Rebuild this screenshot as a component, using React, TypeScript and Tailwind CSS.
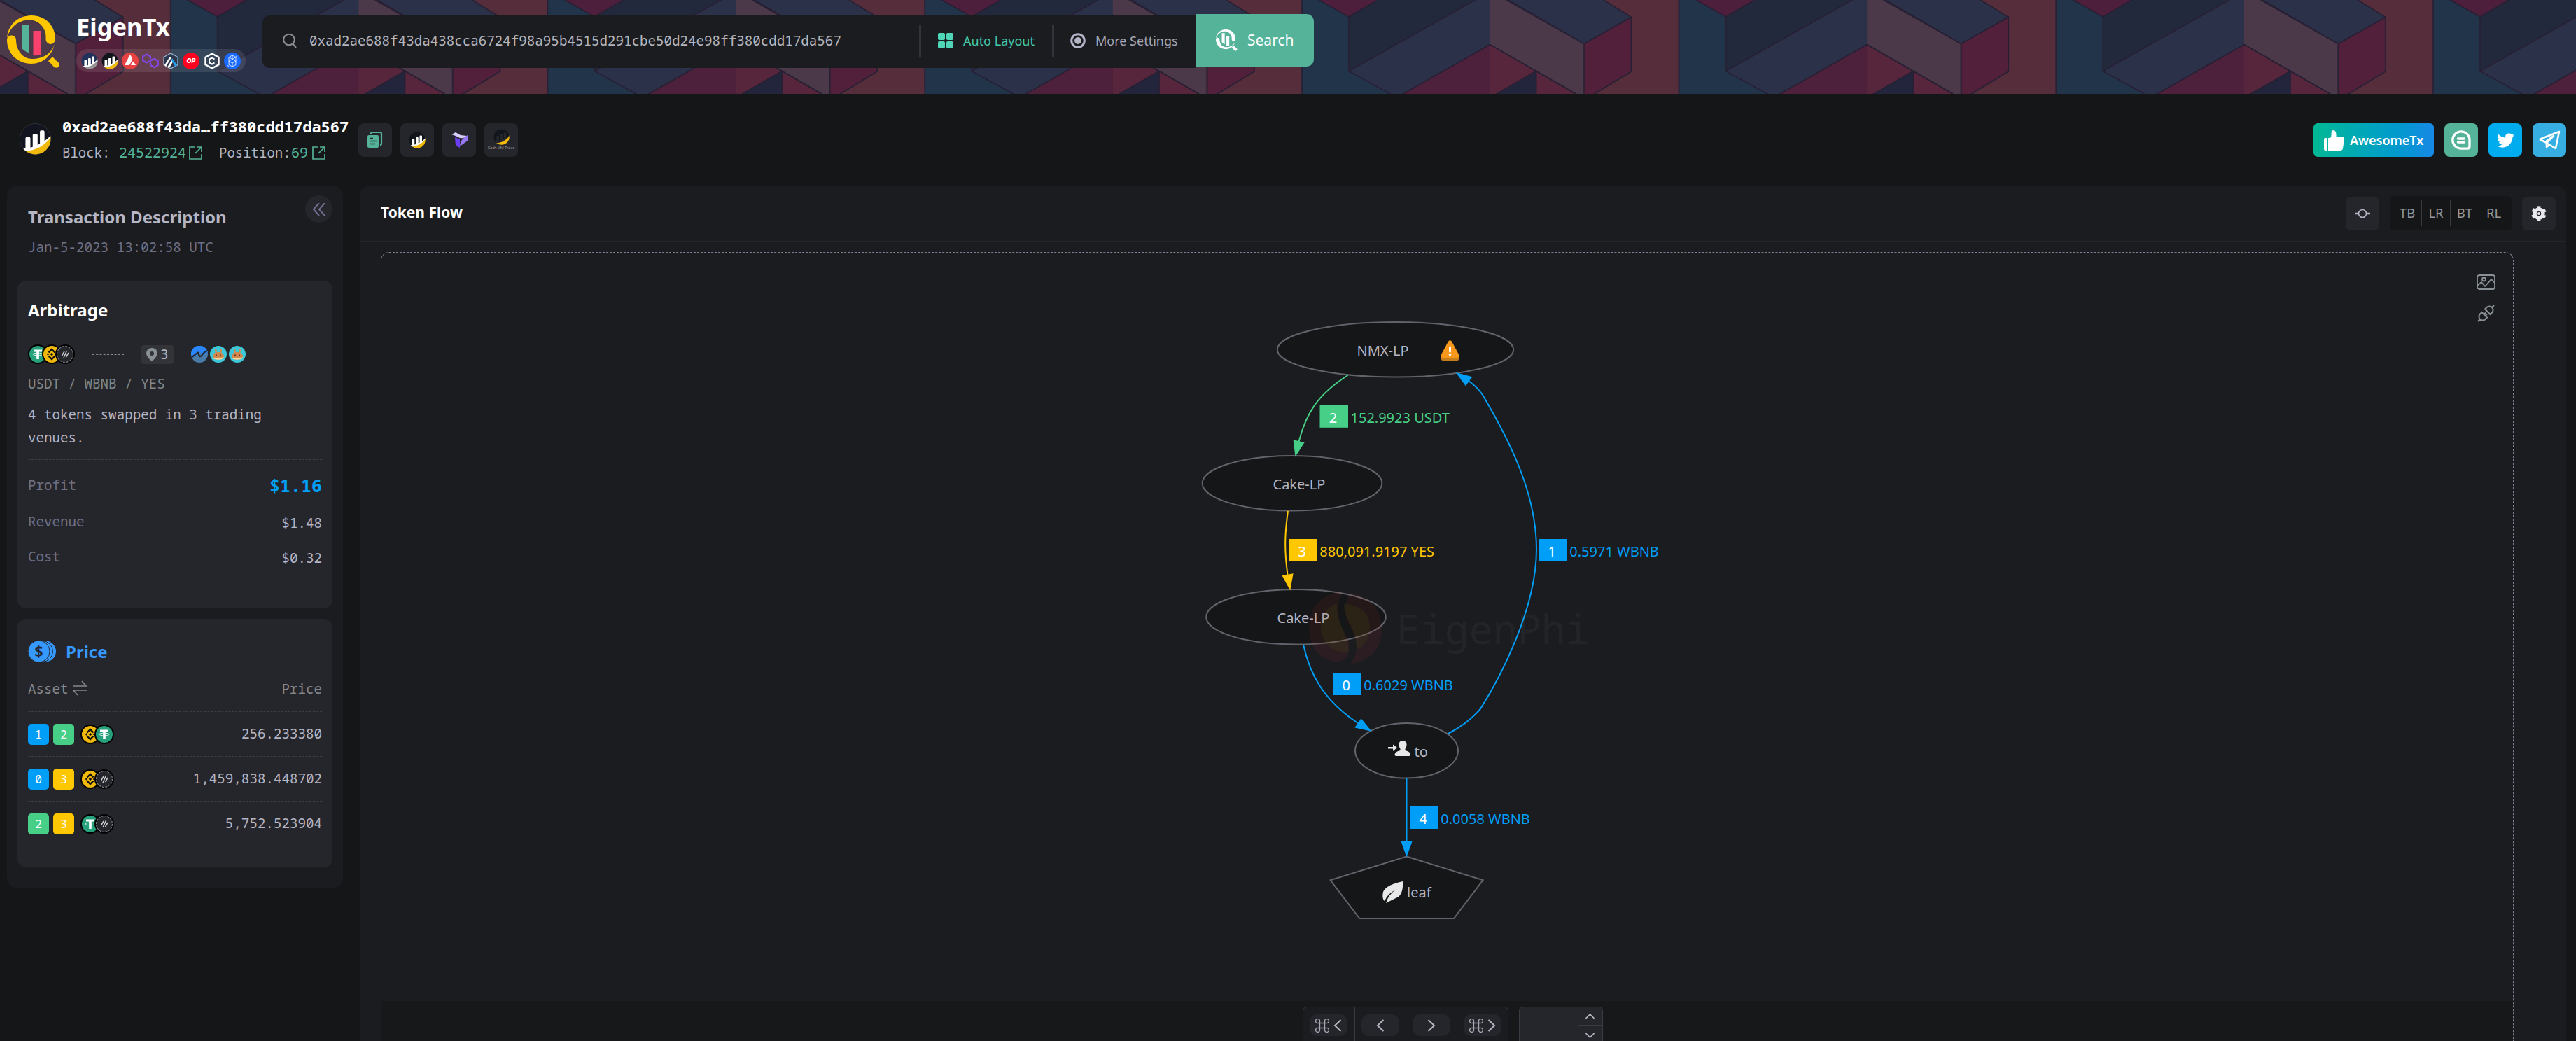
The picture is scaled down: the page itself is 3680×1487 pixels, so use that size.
import React from "react";

const MONO = "font-['Noto_Sans_Mono','DejaVu_Sans_Mono',monospace]";

function HeaderPattern() {
  return (
    <svg className="absolute inset-0 h-full w-full" aria-hidden="true">
      <defs>
        <pattern id="cubes" x="-26.2" y="0" width="538.7" height="134" patternUnits="userSpaceOnUse">
          <rect width="538.7" height="134" fill="#22344a" />
          <rect width="270" height="134" fill="#562d3a" />
          <g stroke="#261f33" strokeWidth="1.8" strokeLinejoin="round">
            <path d="M25 -2 159 -2 202 24.5 134.3 62.5 23 -2Z" fill="#2c314a" />
            <path d="M134.3 62.5 202 24.5V102L146 136H134.3Z" fill="#52203a" />
            <path d="M0 63.5 66 101.5 126 136H-1Z" fill="#57263c" />
            <path d="M66 101.5V136H6Z" fill="#22253b" />
            <path d="M291 -2 337 24 382 -2Z" fill="#4d1f3c" />
            <path d="M337 24 382 -2H521L337 101.5Z" fill="#22293d" />
            <path d="M337 101.5 521 -2H540V63L412 136H400Z" fill="#2c314a" />
            <path d="M540 62.7V136H411Z" fill="#4d203b" />
            <path d="M270 -1V136" />
          </g>
          <path d="M0 0H24L134.3 62.5V134H123L0 63.5Z" fill="#4b3849" />
          <path d="M22 -1 134.3 62.5V135M123 134 0 63.5" fill="none" stroke="#261f33" strokeWidth="1.8" />
          <path d="M538.1 0V62.5" stroke="#2c314a" strokeWidth="1.4" />
          <path d="M538.1 65V134" stroke="#4d203b" strokeWidth="1.4" />
          <path d="M.6 65.5V134" stroke="#57263c" strokeWidth="1.4" />
        </pattern>
      </defs>
      <rect width="100%" height="100%" fill="url(#cubes)" />
    </svg>
  );
}

function BarsLogo({ size, dark, base, id, bars = "#fff", ring = false }: { size: number; dark: string; base: string; id: string; bars?: string; ring?: boolean }) {
  return (
    <svg width={size} height={size} viewBox="0 0 48 48" className="shrink-0">
      <clipPath id={id}>
        <circle cx="24" cy="24" r="23.500" />
      </clipPath>
      {ring && <circle cx="24" cy="24" r="23.300" fill="none" stroke="#3c3f45" strokeWidth="1" />}
      <g clipPath={`url(#${id})`}>
        <circle cx="24" cy="24" r="23.200" fill={dark} />
        <path d="M4 40Q32 40 48 19V48H4Z" fill={base} />
        <path
          d="M0 40Q5 38.5 9 38V23Q9 21 11 21H14.5Q16.500 21 16.500 23V37Q18.500 36.500 20 36V18Q20 16 22 16H25.500Q27.500 16 27.500 18V33Q29.500 32 31 31V13Q31 11 33 11H36Q38 11 38 13V27Q43 23.500 48 18V21Q38 34 25 39Q14 43 4 43Z"
          fill={bars}
        />
      </g>
    </svg>
  );
}

function EigenLogo() {
  return (
    <svg width="76" height="76" viewBox="0 0 76 76" className="shrink-0">
      <path d="M0 33C1 14 15 0 35 0 55 0 69 15 69 33 69 44 55 43 55.500 33 57 19 46 6.500 32 6.500 16 6.500 4 17 0 33Z" fill="#ffc700" />
      <path d="M0 35C0 27 12.500 26 13 35 13 49 22 62 36 62 52 62 64 54 68 41 64 58 51 69 35 69 15 69 0 54 0 35Z" fill="#ffc700" />
      <path d="M62 62 71 71" stroke="#ffc700" strokeWidth="8.500" />
      <path d="M69 69 70.500 70.500" stroke="#ffc700" strokeWidth="8.500" strokeLinecap="round" />
      <path d="M21 13H32V54Q26 52 21 47Z" fill="#55b399" />
      <path d="M37.500 22H48V56Q42 58 37.500 57Z" fill="#f8406d" />
    </svg>
  );
}

function ChainIcons() {
  return (
    <div className="flex h-[33px] w-[242px] items-center rounded-full bg-[#ffffff]/10 pl-[7px] [&>svg]:mr-[5.100px]">
      <BarsLogo size={24} dark="#21325b" base="#979695" id="c-eth" />
      <BarsLogo size={24} dark="#12161c" base="#f0b90b" id="c-bsc" />
      <svg width="24" height="24" viewBox="0 0 24 24" className="shrink-0">
        <circle cx="12" cy="12" r="12" fill="#e84142" />
        <path d="M4 18 11 4.500Q12 3 13 4.500L15 8.500Q15.300 9.500 15 10.500L11.500 17Q11 18 10 18ZM13 18 16 13Q16.500 12.300 17 13L20 18Z" fill="#fff" />
      </svg>
      <svg width="24" height="24" viewBox="0 0 24 24" className="shrink-0" fill="none" stroke="#8247e5" strokeWidth="2.200" strokeLinejoin="round">
        <path d="M12 9.500V5.500L6.500 2.500 1.200 5.500V11.500L6.500 14.500 17.500 8.800 22.800 12V18L17.500 21.200 12 18V14" />
      </svg>
      <svg width="24" height="24" viewBox="0 0 24 24" className="shrink-0" fill="none">
        <path d="M12 1 22 6.500V17.500L12 23 2 17.500V6.500Z" fill="#2d374b" stroke="#96bedc" strokeWidth="1.200" />
        <path d="M3 18 10 7H13L5 20ZM7 21 14.500 9 16 11.500 10 22Z" fill="#fff" />
        <path d="M14 8 21 18 18.500 20 13 11Z" fill="#28a0f0" />
      </svg>
      <svg width="24" height="24" viewBox="0 0 24 24" className="shrink-0">
        <circle cx="12" cy="12" r="12" fill="#ff0420" />
        <text x="12" y="15.300" textAnchor="middle" fontFamily="Inter" fontWeight="800" fontStyle="italic" fontSize="9" fill="#fff">OP</text>
      </svg>
      <svg width="24" height="24" viewBox="0 0 24 24" className="shrink-0" fill="none" stroke="#fff">
        <path d="M12 1.500 21.500 6.700V17.300L12 22.500 2.500 17.300V6.700Z" strokeWidth="2.400" />
        <path d="M15.500 9.500 12 7.500 8 9.700V14.300L12 16.500 15.500 14.500" strokeWidth="2" />
      </svg>
      <svg width="24" height="24" viewBox="0 0 24 24" className="shrink-0" fill="none">
        <circle cx="12" cy="12" r="12" fill="#1969ff" />
        <path d="M12 4 17 6.500V17.500L12 20 7 17.500V6.500ZM7 6.500 12 9.500 17 6.500M7 12.500 12 9.500 17 12.500 12 15ZM12 4V9.500M12 15V20M5 18.500 7 19.500M17 5 19 6" stroke="#fff" strokeWidth=".8" />
      </svg>
    </div>
  );
}

function Header() {
  return (
    <header className="relative h-[134px] shrink-0 overflow-hidden">
      <HeaderPattern />
      <div className="relative flex h-full items-start">
        <div className="mt-[22px] ml-[10px]">
          <EigenLogo />
        </div>
        <div className="mt-[12px] ml-[23px] w-[266px]">
          <h1 className="h-[58px] text-[34.500px] leading-[52px] font-bold text-white">EigenTx</h1>
          <ChainIcons />
        </div>
        <div className="mt-[20px] flex h-[77px] w-[1502px] items-start">
          <div className="mt-[2px] flex h-[75px] w-[1333px] items-center rounded-l-[10px] bg-[#1b1c20] pb-[3px]">
            <svg width="24" height="24" viewBox="0 0 24 24" fill="none" stroke="#8d8e92" strokeWidth="2" className="mr-[16px] ml-[27px]">
              <circle cx="11" cy="10.500" r="7.800" />
              <path d="M16.500 16.500 21 22" />
            </svg>
            <span className={`${MONO} w-[871px] text-[19.200px] text-[#b5b5bd]`}>0xad2ae688f43da438cca6724f98a95b4515d291cbe50d24e98ff380cdd17da567</span>
            <span className="h-[45px] w-[3px] bg-[#32333b]" />
            <svg width="22" height="22" viewBox="0 0 22 22" fill="#4fd6b6" className="ml-[24px]">
              <rect width="10" height="10" rx="2" />
              <rect x="12" width="10" height="10" rx="2" />
              <rect y="12" width="10" height="10" rx="2" />
              <rect x="12" y="12" width="10" height="10" rx="2" />
            </svg>
            <span className="ml-[14px] w-[127px] text-[18px] text-[#43c9a5]">Auto Layout</span>
            <span className="h-[45px] w-[3px] bg-[#32333b]" />
            <svg width="22" height="22" viewBox="0 0 22 22" fill="none" className="ml-[23px]">
              <circle cx="11" cy="11" r="9.300" stroke="#b5b5c8" strokeWidth="3" />
              <circle cx="11" cy="11" r="5" fill="#b5b5c8" />
            </svg>
            <span className="ml-[14px] text-[18px] whitespace-nowrap text-[#a6a6b6]">More Settings</span>
          </div>
          <div className="flex h-[75px] w-[169px] items-center rounded-r-[10px] bg-[#55b399] pl-[29px]">
            <svg width="31" height="31" viewBox="0 0 76 76">
              <path d="M0 33C1 14 15 0 35 0 55 0 69 15 69 33 69 44 55 43 55.500 33 57 19 46 6.500 32 6.500 16 6.500 4 17 0 33ZM0 35C0 27 12.500 26 13 35 13 49 22 62 36 62 52 62 64 54 68 41 64 58 51 69 35 69 15 69 0 54 0 35ZM21 13H31V52L21 45ZM37 22H47V57H37Z" fill="#fff" />
              <path d="M59 60 72 73" stroke="#fff" strokeWidth="10" />
            </svg>
            <span className="ml-[14px] text-[21px] text-white">Search</span>
          </div>
        </div>
      </div>
    </header>
  );
}

function ExternalIcon() {
  return (
    <svg width="19" height="19" viewBox="0 0 19 19" fill="none" stroke="#55b399" strokeWidth="1.700" className="shrink-0">
      <path d="M8 1H1V18H18V11M11 1H18V8M18 1 9 10" />
    </svg>
  );
}

function Square({ children, className = "bg-[#25262b]" }: { children: React.ReactNode; className?: string }) {
  return <div className={`flex h-[48px] w-[48px] shrink-0 items-center justify-center rounded-[8px] ${className}`}>{children}</div>;
}

function TxBar() {
  return (
    <section className="flex h-[131px] shrink-0 items-start pt-[42px] pr-[14px] pl-[28px]">
      <BarsLogo size={45} dark="#12151f" base="#f0b90b" id="tx-bsc" ring />
      <div className={`${MONO} -mt-[14px] ml-[16px] w-[423px]`}>
        <div className="h-[38px] text-[22px] leading-[36px] font-bold text-white">0xad2ae688f43da…ff380cdd17da567</div>
        <div className="flex h-[36px] items-center text-[20px] text-[#b5b5c3]">
          <span className="w-[81px] text-[19px]">Block:</span>
          <span className="w-[100px] text-[#55b399]">24522924</span>
          <ExternalIcon />
          <span className="ml-[24px] w-[103px] text-[19px]">Position:</span>
          <span className="w-[30px] text-[#55b399]">69</span>
          <ExternalIcon />
        </div>
      </div>
      <div className="flex gap-[12px]">
        <Square>
          <svg width="22" height="24" viewBox="0 0 22 24">
            <path d="M5 3Q5 1 7 1H18Q20 1 20 3V17Q20 19 18 19" fill="none" stroke="#55b399" strokeWidth="2.200" />
            <rect y="5" width="16" height="18" rx="2" fill="#55b399" />
            <path d="M3 9.500H8M3 13.500H13M3 17.500H11" stroke="#25262b" strokeWidth="1.500" />
          </svg>
        </Square>
        <Square>
          <BarsLogo size={24} dark="#12161c" base="#f0b90b" id="sq-bsc" />
        </Square>
        <Square>
          <svg width="24" height="24" viewBox="0 0 24 24">
            <path d="M1 4 7 1 14 5 23 6Q19 10 13 9Q8 6 1 4Z" fill="#d9cdfb" />
            <path d="M6 8 13 11V23L7 20Z" fill="#6a3df0" />
            <path d="M24 5V13L13 21Q13 11 24 5Z" fill="#9877f5" />
          </svg>
        </Square>
        <Square>
          <div className="flex flex-col items-center">
            <BarsLogo size={23} dark="#12161c" base="#f0b90b" id="geth-bsc" bars="#25262b" />
            <span className="-mx-2 text-[5.700px] leading-[9px] whitespace-nowrap text-[#9a9a9f]">Geth VM Trace</span>
          </div>
        </Square>
      </div>
      <div className="ml-auto flex gap-[15px]">
        <div className="flex h-[48px] w-[172px] items-center rounded-[6px] bg-linear-to-r from-[#00b894] to-[#1789e4] pl-[15px]">
          <svg width="29" height="29" viewBox="0 0 29 29" fill="#fff">
            <path d="M0 13Q0 11 2 11H5V29H2Q0 29 0 27ZM6 11H9Q11 9 10.500 4 10.500 0 14 0 18 1 17.500 9H26Q29.500 9 29 13L27 26Q26.500 29 23 29H6Z" />
          </svg>
          <span className="ml-[8px] text-[18px] font-semibold text-white">AwesomeTx</span>
        </div>
        <Square className="bg-[#55b399]">
          <svg width="28" height="28" viewBox="0 0 28 28" fill="none" stroke="#fff">
            <path d="M14 1.800A12 12 0 1 0 14 26.200H23Q26 26.200 26 23V14A12 12 0 0 0 14 1.800Z" strokeWidth="3.300" />
            <path d="M9.500 12H18.500M9.500 17H18.500" strokeWidth="3.500" strokeLinecap="round" />
          </svg>
        </Square>
        <Square className="bg-[#00acee]">
          <svg width="25" height="25" viewBox="0 0 24 24" fill="#fff">
            <path d="M23.950 4.570a10 10 0 0 1-2.820.770 4.960 4.960 0 0 0 2.160-2.720c-.950.550-2 .950-3.130 1.180a4.920 4.920 0 0 0-8.380 4.480C7.690 8.100 4.070 6.130 1.640 3.160a4.820 4.820 0 0 0-.670 2.480c0 1.710.870 3.210 2.190 4.100a4.900 4.900 0 0 1-2.230-.620v.060a4.920 4.920 0 0 0 3.950 4.830 5 5 0 0 1-2.210.080 4.940 4.940 0 0 0 4.600 3.420A9.870 9.870 0 0 1 0 19.540a14 14 0 0 0 7.550 2.210c9.050 0 14-7.500 14-13.980 0-.210 0-.420-.020-.630a9.940 9.940 0 0 0 2.460-2.550z" />
          </svg>
        </Square>
        <Square className="bg-[#37aee2]">
          <svg width="32" height="28" viewBox="0 0 32 28" fill="none" stroke="#fff" strokeWidth="2.600" strokeLinejoin="round">
            <path d="M2 13 30 2 25 26 10 17 22 8 12 18V24L16 21M10 17 2 13" />
          </svg>
        </Square>
      </div>
    </section>
  );
}

type Token = "usdt" | "bnb" | "none";

function TokenIcon({ kind }: { kind: Token }) {
  return (
    <svg width="28" height="28" viewBox="0 0 28 28" className="shrink-0">
      <circle cx="14" cy="14" r="14" fill="#000" />
      {kind === "usdt" && (
        <>
          <circle cx="14" cy="14" r="12" fill="#26a17b" />
          <path d="M8 7.500H20V10.500H15.800V21H12.200V10.500H8Z" fill="#fff" />
          <ellipse cx="14" cy="14" rx="7" ry="1.800" fill="none" stroke="#fff" strokeWidth=".8" />
        </>
      )}
      {kind === "bnb" && (
        <>
          <circle cx="14" cy="14" r="12" fill="#f0b90b" />
          <path d="M9.500 11.500 14 7 18.500 11.500M9.500 16.500 14 21 18.500 16.500" fill="none" stroke="#111" strokeWidth="2.300" />
          <path d="M14 11.700 16.300 14 14 16.300 11.700 14ZM8.500 12.300 10.200 14 8.500 15.700 6.800 14ZM19.500 12.300 21.200 14 19.500 15.700 17.800 14Z" fill="#111" />
        </>
      )}
      {kind === "none" && (
        <>
          <circle cx="14" cy="14" r="11.500" fill="#25262b" stroke="#7b7c82" strokeWidth="1.200" strokeDasharray="3 1.500" />
          <path d="M9.500 16 13 10M12 19 16.500 9M15.500 18 19 12" stroke="#c9c9cf" strokeWidth="1.500" />
        </>
      )}
    </svg>
  );
}

function TokenStack({ tokens }: { tokens: Token[] }) {
  return (
    <div className="flex [&>svg+svg]:-ml-[8.500px]">
      {tokens.map((t) => (
        <TokenIcon key={t} kind={t} />
      ))}
    </div>
  );
}

function CakeIcon() {
  return (
    <svg width="24" height="24" viewBox="0 0 24 24" className="shrink-0">
      <circle cx="12" cy="12" r="12" fill="#3cc8d8" />
      <path d="M7 5.500Q8 3.500 9.300 5.500L10 9H14L14.700 5.500Q16 3.500 17 5.500L16.500 10Q20 12 20 15 19.500 19.500 12 19.500 4.500 19.500 4 15 4 12 7.500 10Z" fill="#d1884f" />
      <path d="M4 15.500Q5 18 12 18 19 18 20 15.500 20 19.800 12 19.800 4 19.800 4 15.500Z" fill="#f3d9a4" />
      <ellipse cx="9" cy="13.500" rx=".9" ry="1.300" fill="#5b3418" />
      <ellipse cx="15" cy="13.500" rx=".9" ry="1.300" fill="#5b3418" />
    </svg>
  );
}

function StatRow({ label, value, className }: { label: string; value: string; className: string }) {
  return (
    <div className="flex items-center justify-between">
      <span className="text-[#6f6f86]">{label}</span>
      <span className={className}>{value}</span>
    </div>
  );
}

const PRICES: { a: string; ac: string; b: string; bc: string; tokens: Token[]; price: string }[] = [
  { a: "1", ac: "bg-[#009ef7]", b: "2", bc: "bg-[#47cf87]", tokens: ["bnb", "usdt"], price: "256.233380" },
  { a: "0", ac: "bg-[#009ef7]", b: "3", bc: "bg-[#ffc700]", tokens: ["bnb", "none"], price: "1,459,838.448702" },
  { a: "2", ac: "bg-[#47cf87]", b: "3", bc: "bg-[#ffc700]", tokens: ["usdt", "none"], price: "5,752.523904" },
];

function Sidebar() {
  return (
    <aside className="h-[1004px] w-[480px] shrink-0 rounded-[15px] bg-[#1b1c20] px-[15px]">
      <div className="flex h-[136px] justify-between">
        <div className="pt-[27px] pl-[15px]">
          <h2 className="h-[36px] text-[24px] leading-[36px] font-bold whitespace-nowrap text-[#b5b5c3]">Transaction Description</h2>
          <p className={`${MONO} mt-[10px] text-[19.200px] leading-[30px] text-[#6f6f86]`}>Jan-5-2023 13:02:58 UTC</p>
        </div>
        <div className="mt-[14px] flex h-[39px] w-[39px] items-center justify-center rounded-full bg-[#25262b]">
          <svg width="18" height="18" viewBox="0 0 18 18" fill="none" stroke="#6f6f8f" strokeWidth="2">
            <path d="M9 0 1 9 9 18M17 0 9 9 17 18" />
          </svg>
        </div>
      </div>

      <div className={`h-[468px] rounded-[12px] bg-[#25262b] px-[15px] pt-[24px] text-[19.200px] ${MONO}`}>
        <h3 className="h-[36px] font-['Noto_Sans',sans-serif] text-[24px] leading-[36px] font-bold text-white">Arbitrage</h3>
        <div className="mt-[30px] flex h-[30px] items-center">
          <TokenStack tokens={["usdt", "bnb", "none"]} />
          <span className="ml-[25px] w-[45px] border-t border-dashed border-[#8a8b8f]" />
          <span className="mr-[24px] ml-[24px] flex h-[27px] w-[48px] items-center rounded-[5px] bg-[#333438] pl-[8px]">
            <svg width="16" height="19" viewBox="0 0 16 19">
              <path d="M8 0A8 8 0 0 1 16 8Q15 14 8 19 1 14 0 8A8 8 0 0 1 8 0Z" fill="#8a9196" />
              <circle cx="8" cy="8" r="3" fill="#333438" />
            </svg>
            <span className="ml-[4px] text-[#b5b5c3]">3</span>
          </span>
          <div className="flex gap-[3px]">
            <svg width="24" height="24" viewBox="0 0 24 24">
              <circle cx="12" cy="12" r="12" fill="#4a7ba8" />
              <path d="M0 13A12 12 0 0 1 22 5L24 9Q20 11 17 15L13 9Q9 14 3 16Z" fill="#2a86ff" />
              <path d="M1 16Q6 13 9 10 11 8.500 11 12 12 17 15 14 18 9 23 7" fill="none" stroke="#25262b" strokeWidth="2.200" />
            </svg>
            <CakeIcon />
            <CakeIcon />
          </div>
        </div>
        <p className="mt-[12px] leading-[30px] text-[#80888a]">USDT / WBNB / YES</p>
        <p className="mt-[12px] w-[380px] leading-[33px] text-[#b5b5c3]">4 tokens swapped in 3 trading venues.</p>
        <div className="mt-[15px] mb-[15px] border-t border-dashed border-[#3d3e47]" />
        <div className="flex flex-col">
          <div className="h-[52px]">
            <StatRow label="Profit" value="$1.16" className="text-[25px] leading-[42px] font-bold text-[#009ef7]" />
          </div>
          <div className="h-[50px]">
            <StatRow label="Revenue" value="$1.48" className="pt-[3px] leading-[40px] text-[#b5b5c3]" />
          </div>
          <StatRow label="Cost" value="$0.32" className="pt-[3px] leading-[40px] text-[#b5b5c3]" />
        </div>
      </div>

      <div className={`mt-[15px] h-[355px] rounded-[12px] bg-[#25262b] px-[15px] pt-[28px] text-[19.200px] ${MONO}`}>
        <div className="flex h-[37px] items-center">
          <svg width="41" height="31" viewBox="0 0 41 31">
            <circle cx="25" cy="15.500" r="15" fill="#3699ff" />
            <circle cx="20.500" cy="15.500" r="15" fill="#3699ff" stroke="#25262b" strokeWidth="1" />
            <circle cx="15.500" cy="15.500" r="15.500" fill="#3699ff" stroke="#25262b" strokeWidth="1" />
            <text x="15.500" y="23" textAnchor="middle" fontFamily="Noto Sans" fontWeight="700" fontSize="21" fill="#25262b">$</text>
          </svg>
          <span className="ml-[13px] font-['Noto_Sans',sans-serif] text-[24px] font-bold text-[#3699ff]">Price</span>
        </div>
        <div className="mt-[19px] flex h-[49px] items-start justify-between border-b border-dashed border-[#3d3e47] leading-[32px] text-[#85868a]">
          <span className="flex items-center">
            Asset
            <svg width="20" height="22" viewBox="0 0 20 22" fill="none" stroke="#85868a" strokeWidth="1.700" className="mb-[3px] ml-[6px]">
              <path d="M0 8H19L13 1M20 14H1L7 21" />
            </svg>
          </span>
          <span>Price</span>
        </div>
        {PRICES.map((p) => (
          <div key={p.price} className="flex h-[64px] items-center border-b border-dashed border-[#3d3e47] text-[#b5b5c3]">
            <span className={`flex h-[30px] w-[30px] items-center justify-center rounded-[5px] text-[16px] text-white ${p.ac}`}>{p.a}</span>
            <span className={`mr-[9px] ml-[6px] flex h-[30px] w-[30px] items-center justify-center rounded-[5px] text-[16px] text-white ${p.bc}`}>{p.b}</span>
            <TokenStack tokens={p.tokens} />
            <span className="ml-auto">{p.price}</span>
          </div>
        ))}
      </div>
    </aside>
  );
}

function EdgeLabel({ x, y, n, text, color }: { x: number; y: number; n: string; text: string; color: string }) {
  return (
    <g>
      <rect x={x} y={y} width="40.500" height="32" fill={color} />
      <text x={x + 19} y={y + 25.300} textAnchor="middle" fill="#fff">{n}</text>
      <text x={x + 44} y={y + 25.300} fill={color}>{text}</text>
    </g>
  );
}

function Graph() {
  const blue = "#009ef7";
  const green = "#47cf87";
  const yellow = "#ffc700";
  return (
    <svg className="absolute top-0 left-0" width="3045" height="1126" viewBox="545 361 3045 1126" fontFamily="Noto Sans" fontSize="20">
      <g fill="#141617" stroke="#62636b" strokeWidth="2">
        <ellipse cx="1993.500" cy="499.300" rx="168.700" ry="39.300" />
        <ellipse cx="1846" cy="690.300" rx="128.300" ry="39.300" />
        <ellipse cx="1851.500" cy="881.300" rx="128.300" ry="39.300" />
        <ellipse cx="2009.500" cy="1072.300" rx="73.500" ry="39.300" />
        <path d="M2009.500 1223.500 2118.600 1257.300 2077 1312H1942.300L1900.600 1257.300Z" />
      </g>
      <g fill="none" strokeWidth="2">
        <path d="M1925.500 536C1882 564 1866 590 1855.500 631" stroke={green} />
        <path d="M1840 730C1835 765 1835 788 1839.500 821" stroke={yellow} />
        <path d="M1862 921C1871 962 1890 1000 1940 1033" stroke={blue} />
        <path d="M2068 1048.500C2090 1037 2103 1027 2115 1012.500 2142 970 2195 870 2195 785 2195 705 2157 630 2118 564 2112 555 2105 549 2098 544" stroke={blue} />
        <path d="M2009.500 1111.500V1204" stroke={blue} />
      </g>
      <path d="M1850.500 652.500 1847.600 628.300 1863.600 632Z" fill={green} />
      <path d="M1843.200 843.500 1831.600 822.300 1847.600 819.300Z" fill={yellow} />
      <path d="M2079.800 532 2103.500 538.300 2093.800 551.300ZM1959.600 1044.700 1935.300 1039.600 1944.500 1026.200ZM2009.500 1224.500 2001.600 1202H2017.500Z" fill={blue} />
      <g fill="#b5b5c3">
        <text x="1938.500" y="508">NMX-LP</text>
        <text x="1818.500" y="699">Cake-LP</text>
        <text x="1824.500" y="890">Cake-LP</text>
        <text x="2020.500" y="1081">to</text>
        <text x="2010" y="1282">leaf</text>
      </g>
      <path d="M2069 488Q2071.500 484.500 2074 488L2084 506V513Q2084 515 2082 515H2061Q2059 515 2059 513V506Z" fill="#c87d1b" />
      <path d="M2069 488Q2071.500 484.500 2074 488L2084 507Q2085 511 2082 511H2061Q2058 511 2059 507Z" fill="#f7981d" />
      <path d="M2071.500 496V502" stroke="#fff" strokeWidth="3" strokeLinecap="round" />
      <circle cx="2071.500" cy="506.500" r="1.800" fill="#fff" />
      <g fill="#e8e8e8">
        <path d="M1983 1067H1990V1063.500L1996 1068 1990 1073V1069.500H1983ZM2004 1058C2008 1058 2010 1061 2009.500 1065 2009 1068 2007 1069 2007.500 1072 2012 1073 2015 1075 2015 1078Q2015 1080 2013 1080H1994.500Q1992.500 1080 1992.500 1078C1993 1075 1996 1073 2000.500 1072 2001 1069 1999 1068 1998.500 1065 1998 1061 2000 1058 2004 1058Z" />
        <path d="M2004 1259Q2005 1275 1998 1281 1990 1285 1980 1290 1984 1277 1994 1271 1983 1276 1978 1287 1974 1284 1976 1274 1980 1264 2004 1259Z" />
      </g>
      <EdgeLabel x={1885.500} y={578.800} n="2" text="152.9923 USDT" color={green} />
      <EdgeLabel x={1841.300} y={770} n="3" text="880,091.9197 YES" color={yellow} />
      <EdgeLabel x={2198.300} y={770} n="1" text="0.5971 WBNB" color={blue} />
      <EdgeLabel x={1904.300} y={961} n="0" text="0.6029 WBNB" color={blue} />
      <EdgeLabel x={2014.300} y={1152} n="4" text="0.0058 WBNB" color={blue} />
      <g>
        <path d="M1919 844Q1870 852 1870 898 1872 940 1910 946 1930 944 1927 915 1900 875 1919 844ZM1930 847Q1972 856 1974 898 1974 940 1929 949 1944 930 1934 905 1912 870 1930 847Z" fill="#f03030" fillOpacity=".08" />
        <path d="M1910 862Q1887 870 1887 897 1889 930 1926 933 1928 920 1918 898 1909 880 1910 862ZM1920 862Q1957 866 1957 897 1956 920 1938 928 1938 910 1930 893 1919 875 1920 862Z" fill="#80a000" fillOpacity=".08" />
        <text x="1995" y="920" fontFamily="Noto Sans Mono, DejaVu Sans Mono" fontSize="57.500" fill="#fff" fillOpacity=".035">EigenPhi</text>
      </g>
    </svg>
  );
}

function Command() {
  return (
    <svg width="20" height="20" viewBox="0 0 20 20" fill="none" stroke="#a9a9b5" strokeWidth="1.300">
      <path d="M6.500 6.500H13.500V13.500H6.500ZM6.500 6.500H4A3 3 0 1 1 6.500 4ZM13.500 6.500V4A3 3 0 1 1 16 6.500ZM13.500 13.500H16A3 3 0 1 1 13.500 16ZM6.500 13.500V16A3 3 0 1 1 4 13.500Z" />
    </svg>
  );
}

function Chevron({ right = false }: { right?: boolean }) {
  return (
    <svg width="12" height="18" viewBox="0 0 12 18" fill="none" stroke="#b5b5c3" strokeWidth="2">
      <path d={right ? "M1.500 1 10 9 1.500 17" : "M10.500 1 2 9 10.500 17"} />
    </svg>
  );
}

function Key({ children }: { children: React.ReactNode }) {
  return (
    <div className="flex h-full w-[73.500px] justify-center border-l border-[#3a3b42] pt-[10px] first:border-l-0">
      <span className="flex h-[31px] w-[54px] items-center justify-center gap-[6px] rounded-[11px] bg-[#25262b]">{children}</span>
    </div>
  );
}

function Pager() {
  return (
    <div className="relative flex h-[57px] items-start justify-center overflow-hidden bg-[#17181a] pt-[8px] pl-[15px]">
      <div className="flex h-[60px] w-[294px] rounded-[6px] border border-[#3a3b42] bg-[#1b1c20]">
        <Key><Command /><Chevron /></Key>
        <Key><Chevron /></Key>
        <Key><Chevron right /></Key>
        <Key><Command /><Chevron right /></Key>
      </div>
      <div className="ml-[15px] flex h-[60px] w-[120px] rounded-[6px] border border-[#3a3b42] bg-[#25262b]">
        <div className="ml-auto flex w-[35px] flex-col border-l border-[#3a3b42]">
          <div className="flex h-[26px] items-center justify-center border-b border-[#3a3b42]">
            <svg width="13" height="8" viewBox="0 0 13 8" fill="none" stroke="#b5b5c3" strokeWidth="1.700"><path d="M.5 7 6.500 1 12.500 7" /></svg>
          </div>
          <div className="flex h-[28px] items-center justify-center">
            <svg width="13" height="8" viewBox="0 0 13 8" fill="none" stroke="#b5b5c3" strokeWidth="1.700"><path d="M.5 1 6.500 7 12.500 1" /></svg>
          </div>
        </div>
      </div>
    </div>
  );
}

function FlowPanel() {
  return (
    <main className="flex h-[1222px] w-[3152px] flex-col rounded-t-[15px] bg-[#1b1c20]">
      <div className="flex h-[80px] shrink-0 items-center border-b border-[#25262b] pr-[15px] pl-[30px]">
        <h2 className="mb-[2px] text-[21px] font-bold text-white">Token Flow</h2>
        <div className="ml-auto flex items-center gap-[15px]">
          <Square>
            <svg width="22" height="14" viewBox="0 0 22 14" fill="none" stroke="#b5b5c3" strokeWidth="1.600">
              <circle cx="11" cy="7" r="5.500" />
              <path d="M0 7H5.500M16.500 7H22" strokeWidth="2.600" />
            </svg>
          </Square>
          <div className="flex h-[49px] w-[174px] items-center rounded-[6px] bg-[#141617] pl-[5px] text-[18.500px] text-[#98989c]">
            <span className="flex h-[37px] w-[41px] items-center justify-center border-r border-[#3a3b42] pb-[2px]">TB</span>
            <span className="flex h-[37px] w-[41px] items-center justify-center border-r border-[#3a3b42] pb-[2px]">LR</span>
            <span className="flex h-[37px] w-[41px] items-center justify-center border-r border-[#3a3b42] pb-[2px]">BT</span>
            <span className="flex h-[37px] w-[41px] items-center justify-center pb-[2px]">RL</span>
          </div>
          <Square>
            <svg width="22" height="22" viewBox="0 0 22 22" fill="none">
              <circle cx="11" cy="11" r="9.200" stroke="#e8e8ee" strokeWidth="3" strokeDasharray="5 4.630" strokeDashoffset="2.500" transform="rotate(-90 11 11)" />
              <circle cx="11" cy="11" r="6" stroke="#e8e8ee" strokeWidth="5.500" />
              <circle cx="11" cy="11" r="1.900" fill="#e8e8ee" />
            </svg>
          </Square>
        </div>
      </div>
      <div className="relative mt-[15px] ml-[30px] flex h-[1127px] w-[3047px] flex-col overflow-hidden rounded-t-[12px] border border-b-0 border-dashed border-[#7e7e90]">
        <Graph />
        <div className="absolute top-[31px] right-[18px] flex w-[42px] flex-col items-center">
          <svg width="27" height="22" viewBox="0 0 27 22" fill="none" stroke="#8a9196" strokeWidth="1.800">
            <rect x="1" y="1" width="25" height="20" rx="3" />
            <circle cx="10.500" cy="7" r="2.500" />
            <path d="M1 16 7 11 12 17 21 7 26 12" />
          </svg>
          <div className="mt-[11px] mb-[9px] w-full border-t border-[#2a2b30]" />
          <svg width="25" height="25" viewBox="0 0 25 25" fill="none" stroke="#8a9196" strokeWidth="2">
            <path d="M1 24 4 21M24 1 21 4M11 6.500 18.500 14 21 11.500A5.300 5.300 0 0 0 13.500 4ZM6.500 11 14 18.500 11.500 21A5.300 5.300 0 0 1 4 13.500ZM9.500 14 12 11.500M11.500 16 14 13.500" />
          </svg>
        </div>
        <div className="mt-auto">
          <Pager />
        </div>
      </div>
    </main>
  );
}

export default function App() {
  return (
    <div className="flex h-[1487px] w-[3680px] flex-col overflow-hidden bg-[#141617] font-['Noto_Sans',sans-serif]">
      <Header />
      <TxBar />
      <div className="flex gap-[24px] pl-[10px]">
        <Sidebar />
        <FlowPanel />
      </div>
    </div>
  );
}
